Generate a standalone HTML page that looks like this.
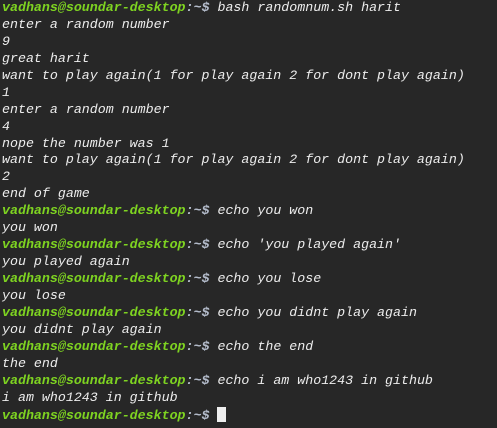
<!DOCTYPE html>
<html><head><style>
html,body{margin:0;padding:0;background:#272727;width:497px;height:428px;overflow:hidden}
pre{margin:0;padding:0 0 0 2px;position:relative;top:0px;font-family:"Liberation Mono","DejaVu Sans Mono",monospace;font-style:italic;font-size:13.3px;line-height:16.93px;color:#ededed}
.g{color:#7ed321;font-weight:bold}
.b{color:#b4bccb;font-weight:bold}
.c{display:inline-block;width:9px;height:15px;background:#eee;vertical-align:-3px}
</style></head><body><pre><span class="g">vadhans@soundar-desktop</span><span class="b">:~$</span> bash randomnum.sh harit
enter a random number
9
great harit
want to play again(1 for play again 2 for dont play again)
1
enter a random number
4
nope the number was 1
want to play again(1 for play again 2 for dont play again)
2
end of game
<span class="g">vadhans@soundar-desktop</span><span class="b">:~$</span> echo you won
you won
<span class="g">vadhans@soundar-desktop</span><span class="b">:~$</span> echo 'you played again'
you played again
<span class="g">vadhans@soundar-desktop</span><span class="b">:~$</span> echo you lose
you lose
<span class="g">vadhans@soundar-desktop</span><span class="b">:~$</span> echo you didnt play again
you didnt play again
<span class="g">vadhans@soundar-desktop</span><span class="b">:~$</span> echo the end
the end
<span class="g">vadhans@soundar-desktop</span><span class="b">:~$</span> echo i am who1243 in github
i am who1243 in github
<span class="g">vadhans@soundar-desktop</span><span class="b">:~$</span> <span class="c"></span></pre></body></html>
